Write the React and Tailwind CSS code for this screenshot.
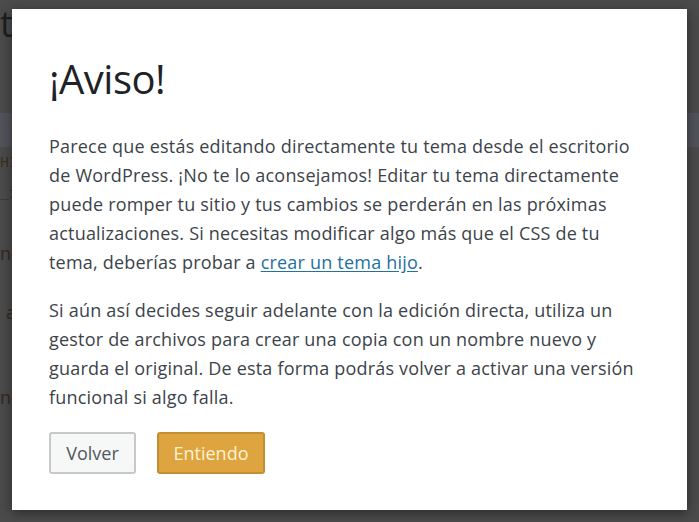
export default function App() {
  return (
    <div className="relative h-[522px] w-[699px] overflow-hidden bg-[#4b4b4b] font-['Open_Sans','Liberation_Sans',sans-serif]">
      {/* page behind the overlay */}
      <div className="flex flex-col text-[#1e1e1e]">
        <div className="h-[113px] pt-[4px] text-[36px] leading-[40px]">t</div>
        <div className="h-[34px] bg-[#51545a]" />
        <div className="flex flex-col gap-[8px] pt-[6px] font-['Liberation_Mono',monospace] text-[15px] text-[#3a3024]">
          <div>HI</div>
          <div>_1</div>
        </div>
        <div className="pt-[34px] text-[18px] text-[#33291f]">ne</div>
        <div className="pl-[6px] pt-[32px] text-[18px] text-[#33291f]">a</div>
        <div className="pt-[58px] text-[18px] text-[#33291f]">ne</div>
      </div>

      {/* modal */}
      <div className="absolute left-[12px] top-[9px] flex h-[501px] w-[675px] flex-col bg-white px-[37px] pt-[43px] shadow-[0_3px_12px_rgba(0,0,0,0.45)]">
        <h1 className="text-[40px] font-medium leading-[54px] tracking-[-0.5px] text-[#1d2327]">¡Aviso!</h1>
        <div className="mt-[26px] flex flex-col gap-[19px] text-[18px] leading-[29px] tracking-[0.2px] text-[#3c434a]">
          <p>
            Parece que estás editando directamente tu tema desde el escritorio de WordPress. ¡No te lo aconsejamos! Editar tu tema directamente puede romper tu sitio y tus cambios se perderán en las próximas actualizaciones. Si necesitas modificar algo más que el CSS de tu tema, deberías probar a{' '}
            <a href="#" className="text-[#2271a1] underline underline-offset-2">crear un tema hijo</a>.
          </p>
          <p>
            Si aún así decides seguir adelante con la edición directa, utiliza un gestor de archivos para crear una copia con un nombre nuevo y guarda el original. De esta forma podrás volver a activar una versión funcional si algo falla.
          </p>
        </div>
        <div className="mt-[20px] flex gap-[21px]">
          <button className="h-[42px] w-[87px] rounded-[3px] border-2 border-[#c8c8c8] bg-[#f6f7f7] text-[18px] text-[#50575e]">Volver</button>
          <button className="h-[42px] w-[108px] rounded-[3px] border-2 border-[#c4902f] bg-[#dda43f] text-[18px] text-[#fdf3d3]">Entiendo</button>
        </div>
      </div>
    </div>
  );
}
